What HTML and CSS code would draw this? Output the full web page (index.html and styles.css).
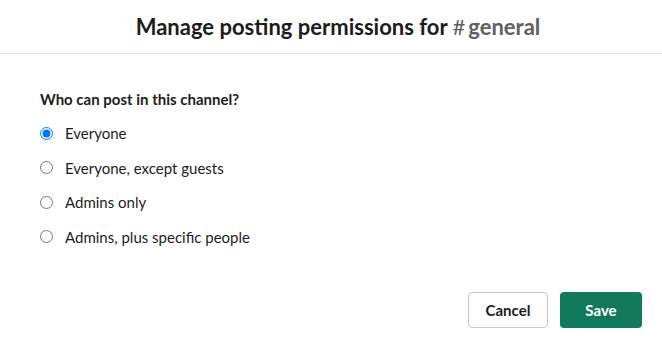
FILE: index.html
```html
<!DOCTYPE html>
<html lang="en">
<head>
    <meta charset="UTF-8">
    <title>Manage posting permissions</title>
    <link rel="stylesheet" href="styles.css">
</head>
<body>
    <div class="modal">
        <div class="modal-header">
            <h2>Manage posting permissions for <span class="channel"><span class="hash">#</span>general</span></h2>
        </div>
        <div class="modal-body">
            <div class="question">Who can post in this channel?</div>
            <label class="option"><input type="radio" name="who" checked> Everyone</label>
            <label class="option"><input type="radio" name="who"> Everyone, except guests</label>
            <label class="option"><input type="radio" name="who"> Admins only</label>
            <label class="option"><input type="radio" name="who"> Admins, plus specific people</label>
        </div>
        <div class="modal-footer">
            <button class="btn btn-cancel">Cancel</button>
            <button class="btn btn-save">Save</button>
        </div>
    </div>
</body>
</html>
```

FILE: styles.css
```css
body, html {
    margin: 0;
    padding: 0;
    font-family: Lato, 'Liberation Sans', sans-serif;
    background-color: #fff;
    color: #1d1c1d;
}
.modal {
    width: 662px;
    height: 342px;
}
.modal-header {
    height: 53px;
    padding-left: 14px;
    border-bottom: 1px solid #e6e6e6;
    box-shadow: 0 1px 2px rgba(0, 0, 0, 0.04);
    display: flex;
    align-items: center;
    justify-content: center;
}
h2 {
    margin: 0;
    font-size: 22px;
    font-weight: 700;
    line-height: 28px;
}
.channel {
    color: #616061;
}
.hash {
    font-weight: 400;
    margin-right: 3px;
}
.modal-body {
    padding: 34px 40px 0 40px;
}
.question {
    font-size: 15px;
    font-weight: 700;
    line-height: 22px;
    margin-bottom: 6px;
}
.option {
    display: flex;
    align-items: center;
    height: 34.5px;
    font-size: 15px;
}
.option input {
    margin: 0 12px 0 0;
    width: 13px;
    height: 13px;
}
.modal-footer {
    display: flex;
    justify-content: flex-end;
    gap: 12px;
    padding: 38px 20px 0 0;
}
.btn {
    height: 36px;
    padding: 0;
    font-family: Lato, 'Liberation Sans', sans-serif;
    font-size: 15px;
    font-weight: 700;
    border-radius: 4px;
    cursor: pointer;
}
.btn-cancel {
    width: 80px;
    background-color: #fff;
    color: #1d1c1d;
    border: 1px solid #c8c8c8;
}
.btn-save {
    width: 82px;
    background-color: #117a5a;
    color: #fff;
    border: none;
}
```
